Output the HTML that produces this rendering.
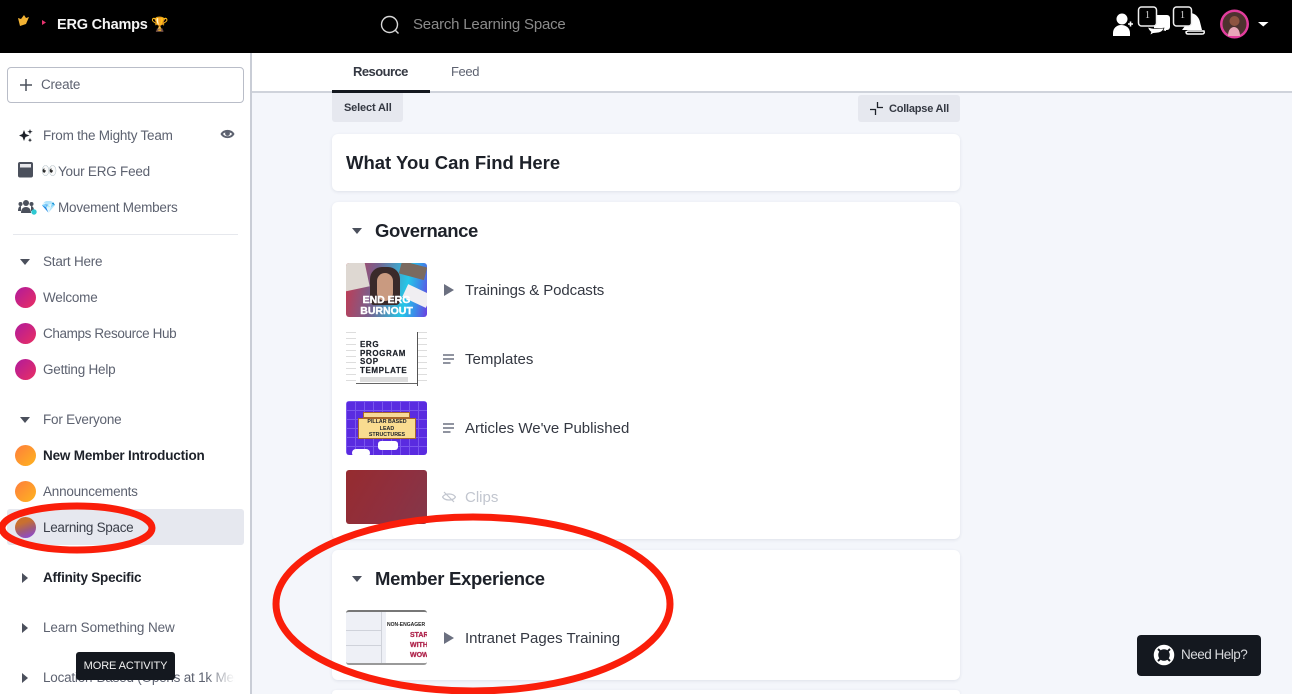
<!DOCTYPE html>
<html><head><meta charset="utf-8"><style>
*{box-sizing:border-box}
html,body{margin:0;padding:0;width:1292px;height:694px;overflow:hidden;background:#f4f6fb;font-family:"Liberation Sans","Noto Sans CJK SC",sans-serif}
#w{position:relative;width:1292px;height:694px;overflow:hidden;background:#f4f6fb}
.a{position:absolute}
.t{position:absolute;white-space:nowrap;line-height:20px;font-size:13.5px;color:#5d6270;letter-spacing:-.22px}
.d{position:absolute;left:15px;width:21px;height:21px;border-radius:50%}
.pk{background:linear-gradient(135deg,#b01a9c,#ea2f62)}
.or{background:linear-gradient(135deg,#ff7d3c,#fdb51f)}
.card{position:absolute;left:332px;width:628px;background:#fff;border-radius:6px;box-shadow:0 1px 3px rgba(40,50,80,.1)}
.h{position:absolute;white-space:nowrap;font-weight:700;color:#1d2129;font-size:18.5px;line-height:24px;letter-spacing:-.3px}
.r{position:absolute;left:465px;font-size:15px;color:#343842;white-space:nowrap;line-height:20px}
.th{position:absolute;left:346px;width:81px;height:54px;border-radius:3px;overflow:hidden}
</style></head><body><div id="w">
<div class="a" style="left:0;top:0;width:1292px;height:53px;background:#000"></div>
<svg class="a" style="left:16px;top:12px" width="34" height="18" viewBox="0 0 34 18"><path d="M2 6l3 1 3-4 2 3 3-1-3 7-6 2z" fill="#f2b233"/><path d="M26 8l4 2.500-4 2.500z" fill="#e8336f"/></svg>
<div class="t" style="left:57px;top:15px;font-size:14.500px;font-weight:700;color:#f4f4f4;letter-spacing:-.2px">ERG Champs</div>
<div class="t" style="left:151px;top:14px;font-size:14px;letter-spacing:0">🏆</div>
<svg class="a" style="left:379px;top:14px" width="22" height="22" viewBox="0 0 22 22" fill="none" stroke="#d8d8d8" stroke-width="1.400"><circle cx="10.500" cy="10.500" r="8"/><path d="M16.500 16.500l3 3"/></svg>
<div class="t" style="left:413px;top:15px;font-size:15px;color:#8b8b8b;letter-spacing:-.2px">Search Learning Space</div>

<svg class="a" style="left:1110px;top:0" width="182" height="45" viewBox="0 0 182 45">
<circle cx="12" cy="19" r="5.500" fill="#fff"/><path d="M3 36v-3c0-5 4-8 8-8 5 0 9 3 9 8v3z" fill="#fff"/><path d="M18 24h5M20.500 21.500v5" stroke="#fff" stroke-width="1.600"/>
<path d="M44 15h13a3 3 0 0 1 3 3v9a3 3 0 0 1-3 3h-1v1l-4-1h-8z" fill="#fff"/><path d="M38 27c4 2 10 2 16 1-1 4-4 5-8 5-2 0-3 0-4 1l-2 1 1-3c-1-1-3-2-3-5z" fill="#fff" stroke="#000" stroke-width=".6"/>
<rect x="28.500" y="7" width="18" height="19" rx="3" fill="#000" stroke="#f0f0f0" stroke-width="1.500"/>
<path d="M80 13c5 0 9 4 10 9l2 8H72l3-4z" fill="#fff"/><path d="M78 31h16q1 3-2 3H78q-2 0-2-2z" fill="none" stroke="#fff" stroke-width="1.500"/>
<rect x="63.500" y="7" width="18" height="19" rx="3" fill="#000" stroke="#f0f0f0" stroke-width="1.500"/>
<circle cx="124.500" cy="24" r="14.500" fill="#e23d9d"/><circle cx="124.500" cy="24" r="12" fill="#4e322f"/><circle cx="124.500" cy="21" r="5" fill="#8e5441"/><path d="M118 36c0-6 3-9 6-9s6 3 6 9z" fill="#e8a6b8"/>
<path d="M148 22h10.500l-5.250 4.500z" fill="#fff"/>
</svg>
<div class="t" style="left:1145px;top:6px;font-size:10px;color:#ddd;font-family:'Liberation Serif',serif">1</div>
<div class="t" style="left:1180px;top:6px;font-size:10px;color:#ddd;font-family:'Liberation Serif',serif">1</div>

<div class="a" style="left:0;top:53px;width:252px;height:641px;background:#fff;border-right:2px solid #c9cdd6"></div>
<div class="a" style="left:252px;top:53px;width:1040px;height:40px;background:#fff;border-bottom:2px solid #cfd3db"></div>
<div class="a" style="left:7px;top:67px;width:237px;height:36px;border:1.500px solid #b9bdc8;border-radius:4px;background:#fff"></div>
<svg class="a" style="left:19px;top:78px" width="14" height="14"><path d="M7 1v12M1 7h12" stroke="#4b505c" stroke-width="1.500"/></svg>
<div class="t" style="left:41px;top:75px">Create</div>

<svg class="a" style="left:18px;top:128px" width="15" height="15" viewBox="0 0 15 15" fill="#1d2129"><path d="M6 2l1.500 4 4 1.500-4 1.500L6 13 4.500 9 1 7.500 4.500 6z"/><path d="M12 1l.7 2 2 .7-2 .7-.7 2-.7-2-2-.7 2-.7zM12 10l.6 1.500 1.400.6-1.400.6-.6 1.500-.6-1.500-1.400-.6 1.400-.6z"/></svg>
<div class="t" style="left:43px;top:126px">From the Mighty Team</div>
<svg class="a" style="left:220px;top:128px" width="15" height="12" viewBox="0 0 15 12"><path d="M.5 6C3 .5 12 .5 14.500 6 12 11.500 3 11.500.5 6z" fill="#5d6270"/><path d="M3 6c2-2.500 7-2.500 9 0-2 3-7 3-9 0z" fill="#fff"/><circle cx="7.500" cy="5.500" r="2.400" fill="#5d6270"/></svg>

<svg class="a" style="left:18px;top:162px" width="15" height="16" viewBox="0 0 15 16"><rect width="15" height="15.500" rx="2" fill="#4b505c"/><rect x="2" y="2" width="11" height="3.500" fill="#e8e8ec"/></svg>
<div class="t" style="left:41px;top:161px;font-size:13px;letter-spacing:0">👀</div>
<div class="t" style="left:58px;top:162px">Your ERG Feed</div>

<svg class="a" style="left:17px;top:198px" width="21" height="18" viewBox="0 0 21 18" fill="#4b505c"><circle cx="9" cy="5" r="3"/><circle cx="3.500" cy="6" r="2"/><circle cx="14.500" cy="6" r="2"/><path d="M4 15c0-4 2-6 5-6s5 2 5 6zM1 13c0-3 1-5 3-5v5zM17 13c0-3-1-5-3-5v5z"/><circle cx="17" cy="14" r="2.700" fill="#2fc9d2"/></svg>
<div class="t" style="left:41px;top:197px;font-size:12px;letter-spacing:0">💎</div>
<div class="t" style="left:58px;top:198px">Movement Members</div>
<div class="a" style="left:13px;top:234px;width:225px;height:1px;background:#e6e8ed"></div>

<svg class="a" style="left:20px;top:259px" width="10" height="6"><path d="M0 0h10L5 6z" fill="#4b505c"/></svg>
<div class="t" style="left:43px;top:252px">Start Here</div>
<div class="d pk" style="top:287px"></div><div class="t" style="left:43px;top:288px">Welcome</div>
<div class="d pk" style="top:323px"></div><div class="t" style="left:43px;top:324px;letter-spacing:-.37px">Champs Resource Hub</div>
<div class="d pk" style="top:359px"></div><div class="t" style="left:43px;top:360px">Getting Help</div>

<svg class="a" style="left:20px;top:417px" width="10" height="6"><path d="M0 0h10L5 6z" fill="#4b505c"/></svg>
<div class="t" style="left:43px;top:410px">For Everyone</div>
<div class="d or" style="top:445px"></div><div class="t" style="left:43px;top:446px;font-weight:700;color:#1d2129;letter-spacing:-.18px">New Member Introduction</div>
<div class="d or" style="top:481px"></div><div class="t" style="left:43px;top:482px">Announcements</div>
<div class="a" style="left:7px;top:509px;width:237px;height:36px;background:#e6e8ef;border-radius:3px"></div>
<div class="d" style="top:517px;background:linear-gradient(160deg,#c9702f 30%,#a05a7a 60%,#8a45e8)"></div>
<div class="t" style="left:43px;top:518px;color:#3b3f4a;letter-spacing:-.3px">Learning Space</div>

<svg class="a" style="left:22px;top:573px" width="6" height="10"><path d="M0 0v10l6-5z" fill="#4b505c"/></svg>
<div class="t" style="left:43px;top:568px;font-weight:700;color:#1d2129">Affinity Specific</div>
<svg class="a" style="left:22px;top:623px" width="6" height="10"><path d="M0 0v10l6-5z" fill="#4b505c"/></svg>
<div class="t" style="left:43px;top:618px;letter-spacing:-.1px">Learn Something New</div>
<svg class="a" style="left:22px;top:673px" width="6" height="10"><path d="M0 0v10l6-5z" fill="#4b505c"/></svg>
<div class="t" style="left:43px;top:668px;width:192px;overflow:hidden;-webkit-mask-image:linear-gradient(90deg,#000 85%,transparent)">Location-Based (Opens at 1k Members)</div>
<div class="a" style="left:76px;top:652px;width:99px;height:28px;background:#14181f;border-radius:3px;color:#f2f2f2;font-size:11px;line-height:28px;text-align:center;letter-spacing:-.1px">MORE ACTIVITY</div>

<div class="t" style="left:353px;top:62px;font-size:13px;font-weight:700;color:#343842;letter-spacing:-.55px">Resource</div>
<div class="a" style="left:332px;top:90px;width:98px;height:3px;background:#14181f"></div>
<div class="t" style="left:451px;top:62px;font-size:13px;color:#5d6270;letter-spacing:-.4px">Feed</div>

<div class="a" style="left:332px;top:93px;width:71px;height:29px;background:#e6e8ef;border-radius:0 0 3px 3px"></div>
<div class="t" style="left:344px;top:98px;font-size:11px;font-weight:700;color:#343842;letter-spacing:-.15px">Select All</div>
<div class="a" style="left:858px;top:95px;width:102px;height:27px;background:#e6e8ef;border-radius:3px"></div>
<svg class="a" style="left:869px;top:101px" width="15" height="15" fill="none" stroke="#1d2129" stroke-width="1.300"><path d="M1 8.500h5.500V14M8.500 1v5.500H14"/></svg>
<div class="t" style="left:889px;top:99px;font-size:11px;font-weight:700;color:#343842;letter-spacing:-.22px">Collapse All</div>

<div class="card" style="top:134px;height:57px"></div>
<div class="h" style="left:346px;top:151px;letter-spacing:0">What You Can Find Here</div>

<div class="card" style="top:202px;height:337px"></div>
<svg class="a" style="left:352px;top:228px" width="10" height="6"><path d="M0 0h10L5 6z" fill="#4b505c"/></svg>
<div class="h" style="left:375px;top:219px;letter-spacing:-.4px">Governance</div>

<div class="th" style="top:263px;background:linear-gradient(100deg,#c8384e 0%,#77608e 35%,#25c7e8 72%,#3a8de8 85%,#6c3fe0 100%)">
<div class="a" style="left:-3px;top:-2px;width:24px;height:28px;background:#ded8d2;transform:rotate(-12deg)"></div>
<div class="a" style="left:54px;top:1px;width:26px;height:13px;background:#7a6a60;transform:rotate(15deg)"></div>
<div class="a" style="left:58px;top:26px;width:26px;height:14px;background:#f0eef2;transform:rotate(25deg)"></div>
<div class="a" style="left:24px;top:4px;width:30px;height:38px;background:#3a2a2a;border-radius:12px 12px 4px 4px"></div>
<div class="a" style="left:31px;top:10px;width:16px;height:28px;background:#c99a80;border-radius:8px"></div>
<div class="a" style="left:0;top:32px;width:81px;text-align:center;color:#fff;font-weight:700;font-size:10.500px;line-height:10.500px;-webkit-text-stroke:.4px #fff">END ERG<br>BURNOUT</div>
</div>
<svg class="a" style="left:444px;top:284px" width="10" height="12"><path d="M0 0v12l10-6z" fill="#6b7080"/></svg>
<div class="r" style="top:280.500px;letter-spacing:-.1px">Trainings &amp; Podcasts</div>

<div class="th" style="top:332px;background:#fff;border-radius:0">
<div class="a" style="left:0;top:0;width:10px;height:54px;background:repeating-linear-gradient(#ddd 0 1px,#fff 1px 6px)"></div>
<div class="a" style="left:71px;top:0;width:10px;height:54px;background:repeating-linear-gradient(#ddd 0 1px,#fff 1px 6px);border-left:1px solid #555"></div>
<div class="a" style="left:14px;top:9px;color:#1d2129;font-weight:700;font-size:8px;line-height:8.500px;letter-spacing:.6px;-webkit-text-stroke:.2px #1d2129">ERG<br>PROGRAM<br>SOP<br>TEMPLATE</div>
<div class="a" style="left:14px;top:45px;width:48px;height:5px;background:#bbb;opacity:.5"></div>
<div class="a" style="left:10px;top:51px;width:61px;height:1px;background:#666"></div>
</div>
<svg class="a" style="left:443px;top:354px" width="11" height="10"><path d="M0 1h11M0 5h11M0 9h7.500" stroke="#6b7080" stroke-width="1.400"/></svg>
<div class="r" style="top:349.500px">Templates</div>

<div class="th" style="top:401px;background-color:#5a2be0;background-image:linear-gradient(#7a55ee 1px,transparent 1px),linear-gradient(90deg,#7a55ee 1px,transparent 1px);background-size:9px 9px">
<div class="a" style="left:17px;top:11px;width:47px;height:6px;background:#f7d998;border:1px solid #a8662a"></div>
<div class="a" style="left:12px;top:17px;width:58px;height:21px;background:#f9dc90;border:1px solid #a8662a;color:#1d2129;font-weight:700;font-size:5.300px;line-height:6.500px;text-align:center">PILLAR BASED<br>LEAD<br>STRUCTURES</div>
<div class="a" style="left:32px;top:40px;width:20px;height:9px;background:#fff;border-radius:3px"></div>
<div class="a" style="left:6px;top:48px;width:18px;height:8px;background:#fff;border-radius:4px"></div>
</div>
<svg class="a" style="left:443px;top:423px" width="11" height="10"><path d="M0 1h11M0 5h11M0 9h7.500" stroke="#6b7080" stroke-width="1.400"/></svg>
<div class="r" style="top:418.500px">Articles We've Published</div>

<div class="th" style="top:470px;background:linear-gradient(120deg,#962b2f,#8e3040 60%,#83384a)"></div>
<svg class="a" style="left:442px;top:491px" width="14" height="12" viewBox="0 0 14 12" fill="none" stroke="#c2c6cf" stroke-width="1.200"><path d="M.5 6C3 2 11 2 13.500 6 11 10 3 10 .5 6z"/><path d="M2 1l10 10"/></svg>
<div class="r" style="top:487.500px;color:#c2c6cf">Clips</div>

<div class="card" style="top:550px;height:130px"></div>
<svg class="a" style="left:352px;top:576px" width="10" height="6"><path d="M0 0h10L5 6z" fill="#4b505c"/></svg>
<div class="h" style="left:375px;top:567px">Member Experience</div>
<div class="th" style="top:610px;height:55px;background:#eef0f6;border-top:2px solid #777;border-bottom:2px solid #999">
<div class="a" style="left:35px;top:0;width:1px;height:55px;background:#cfd2da"></div>
<div class="a" style="left:0;top:18px;width:35px;height:1px;background:#cfd2da"></div>
<div class="a" style="left:0;top:33px;width:35px;height:1px;background:#cfd2da"></div>
<div class="a" style="left:40px;top:0;width:41px;height:51px;background:#fff"></div>
<div class="a" style="left:41px;top:10px;font-size:5px;font-weight:700;color:#222;white-space:nowrap">NON-ENGAGER</div>
<div class="a" style="left:64px;top:19px;font-size:7px;line-height:10px;font-weight:700;color:#b0284f;white-space:nowrap;-webkit-text-stroke:.3px #b0284f">START<br>WITH<br>WOW</div>
</div>
<svg class="a" style="left:444px;top:632px" width="10" height="12"><path d="M0 0v12l10-6z" fill="#6b7080"/></svg>
<div class="r" style="top:628.500px">Intranet Pages Training</div>
<div class="card" style="top:690px;height:4px;border-radius:6px 6px 0 0"></div>

<svg class="a" style="left:0;top:0" width="1292" height="694" fill="none" stroke="#fa1e0a" stroke-width="7">
<ellipse cx="77" cy="528" rx="75" ry="22"/>
<ellipse cx="473" cy="604" rx="197" ry="87"/>
</svg>

<div class="a" style="left:1137px;top:635px;width:124px;height:41px;background:#14181f;border-radius:4px"></div>
<svg class="a" style="left:1153px;top:644px" width="22" height="22" viewBox="0 0 22 22"><circle cx="11" cy="11" r="8" fill="none" stroke="#fff" stroke-width="4.500"/><path d="M5 5l3 3M17 5l-3 3M5 17l3-3M17 17l-3-3" stroke="#14181f" stroke-width="2"/></svg>
<div class="t" style="left:1181px;top:645px;font-size:13.500px;color:#d8d9dc;letter-spacing:-.5px">Need Help?</div>
</div></body></html>
